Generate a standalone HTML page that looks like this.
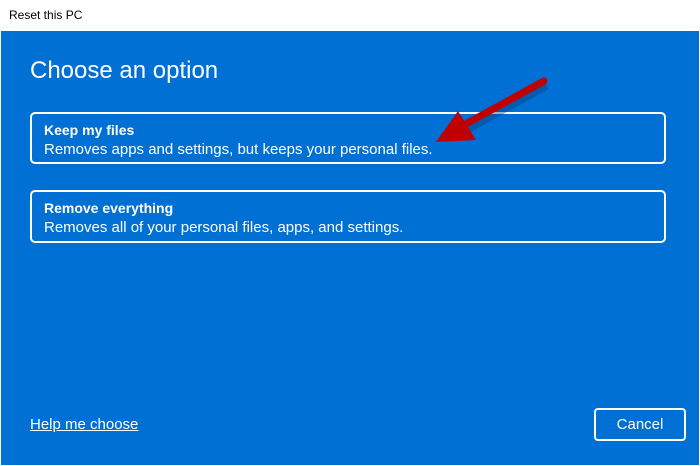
<!DOCTYPE html>
<html><head><style>
html,body{margin:0;padding:0;}
body{width:700px;height:466px;position:relative;overflow:hidden;background:#fff;font-family:"Liberation Sans",sans-serif;}
.title{position:absolute;left:0;top:0;width:700px;height:30px;background:#fff;}
.title span{position:absolute;left:9px;top:8px;font-size:12px;color:#000;}
.main{position:absolute;left:1px;top:31px;width:698px;height:434px;background:#0070d5;}
.h{position:absolute;left:30px;top:57px;font-size:24px;color:#fff;}
.card{position:absolute;left:30px;width:632px;border:2px solid #fff;border-radius:5px;color:#fff;}
.card b{position:absolute;left:12px;top:8px;font-size:14px;}
.card .d{position:absolute;left:12px;top:27px;font-size:15px;white-space:nowrap;}
.help{position:absolute;left:30px;top:416px;font-size:15px;color:#fff;text-decoration:underline;}
.btn{position:absolute;left:594px;top:408px;width:88px;height:29px;border:2px solid #fff;border-radius:4px;color:#fff;font-size:15px;text-align:center;line-height:29px;}
</style></head><body>
<div class="title"><span>Reset this PC</span></div>
<div class="main"></div>
<div class="h">Choose an option</div>
<div class="card" style="top:112px;height:48px"><b>Keep my files</b><div class="d">Removes apps and settings, but keeps your personal files.</div></div>
<div class="card" style="top:190px;height:49px"><b>Remove everything</b><div class="d">Removes all of your personal files, apps, and settings.</div></div>
<div class="help">Help me choose</div>
<div class="btn">Cancel</div>
<svg style="position:absolute;left:0;top:0" width="700" height="466">
<line x1="545" y1="83" x2="465" y2="127" stroke="#0a3a70" stroke-opacity="0.4" stroke-width="7" transform="translate(2,3)"/>
<line x1="544" y1="81" x2="462" y2="126" stroke="#c00000" stroke-width="7" stroke-linecap="round"/>
<polygon points="436,142 458,111 476,140" fill="#c00000"/>
</svg>
</body></html>
